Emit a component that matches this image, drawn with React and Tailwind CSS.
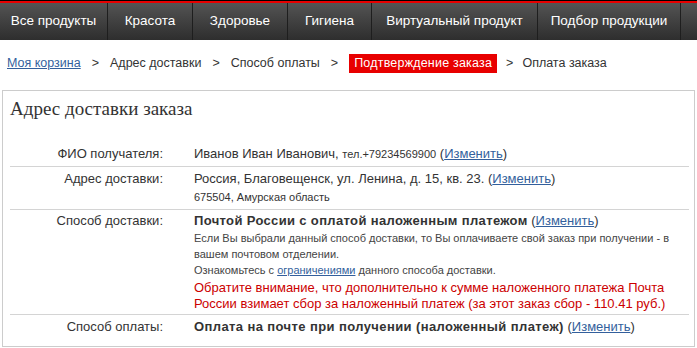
import React from 'react'

// верхнее меню
const TABS = [
  { label: 'Все продукты', w: 'w-[108px]' },
  { label: 'Красота', w: 'w-[85px]' },
  { label: 'Здоровье', w: 'w-[95px]' },
  { label: 'Гигиена', w: 'w-[84px]' },
  { label: 'Виртуальный продукт', w: 'w-[166px]' },
  { label: 'Подбор продукции', w: 'w-[143px]' },
]

function ChangeLink() {
  return (
    <span className="text-[13px] font-normal tracking-normal text-[#333]">
      (<a href="#" className="text-[#335f9c] underline">Изменить</a>)
    </span>
  )
}

export default function App() {
  return (
    <div className="w-[697px] h-[348px] overflow-hidden bg-white font-['Liberation_Sans',sans-serif] text-[#333]">
      {/* шапка */}
      <div className="h-[1px] bg-black" />
      <div className="h-[2px] bg-[#e80000]" />
      <div className="flex h-[37px] bg-gradient-to-b from-[#545454] to-[#2e2e2e]">
        {TABS.map(t => (
          <div
            key={t.label}
            className={`${t.w} shrink-0 flex items-center justify-center border-r border-[#1e1e1e] text-white text-[13.5px]`}
          >
            {t.label}
          </div>
        ))}
        <div className="flex-1" />
      </div>

      {/* хлебные крошки */}
      <div className="flex items-center h-[20px] mt-[13px] pl-[7px] text-[12.5px] text-[#333]">
        <a href="#" className="text-[#335f9c] underline">Моя корзина</a>
        <span className="mx-[11px]">&gt;</span>
        <span>Адрес доставки</span>
        <span className="mx-[11px]">&gt;</span>
        <span>Способ оплаты</span>
        <span className="mx-[11px]">&gt;</span>
        <span className="bg-[#e80000] text-white px-[5px] h-[19px] leading-[19px] tracking-[0.2px]">Подтверждение заказа</span>
        <span className="mx-[9px]">&gt;</span>
        <span>Оплата заказа</span>
      </div>

      {/* блок подтверждения */}
      <div className="mt-[17px] mx-[2px] w-[693px] h-[257px] border border-[#cccccc]">
        <h2 className="pl-[7px] pt-[4px] h-[50px] font-['Liberation_Serif',serif] text-[19px] text-[#333]">
          Адрес доставки заказа
        </h2>

        <div className="ml-[7px] mr-[5px] text-[13px]">
          <div className="flex border-b border-[#d4d4d4] pt-[4px] pb-[3px]">
            <div className="w-[153px] shrink-0 text-right leading-[18px]">ФИО получателя:</div>
            <div className="pl-[31px] leading-[18px]">
              Иванов Иван Иванович, <span className="text-[11px]">тел.+79234569900</span> <ChangeLink />
            </div>
          </div>

          <div className="flex border-b border-[#d4d4d4] pt-[3px] pb-[3px]">
            <div className="w-[153px] shrink-0 text-right leading-[18px]">Адрес доставки:</div>
            <div className="pl-[31px] leading-[18px]">
              <div>Россия, Благовещенск, ул. Ленина, д. 15, кв. 23. <ChangeLink /></div>
              <div className="text-[11px]">675504, Амурская область</div>
            </div>
          </div>

          <div className="flex border-b border-[#d4d4d4] pt-[2px] pb-[2px]">
            <div className="w-[153px] shrink-0 text-right leading-[18px]">Способ доставки:</div>
            <div className="pl-[31px]">
              <div className="leading-[18px]">
                <b className="font-bold tracking-[0.35px]">Почтой России с оплатой наложенным платежом</b> <ChangeLink />
              </div>
              <div className="text-[11px] leading-[16px] text-[#444]">
                Если Вы выбрали данный способ доставки, то Вы оплачиваете свой заказ при получении - в
                <br />
                вашем почтовом отделении.
                <br />
                Ознакомьтесь с <a href="#" className="text-[#335f9c] underline">ограничениями</a> данного способа доставки.
              </div>
              <div className="mt-[2px] leading-[16px] text-[#cc0000]">
                Обратите внимание, что дополнительно к сумме наложенного платежа Почта
                <br />
                России взимает сбор за наложенный платеж (за этот заказ сбор - 110.41 руб.)
              </div>
            </div>
          </div>

          <div className="flex pt-[3px]">
            <div className="w-[153px] shrink-0 text-right leading-[18px]">Способ оплаты:</div>
            <div className="pl-[31px] leading-[18px]">
              <b className="font-bold tracking-[0.4px]">Оплата на почте при получении (наложенный платеж)</b> <ChangeLink />
            </div>
          </div>
        </div>
      </div>
    </div>
  )
}
